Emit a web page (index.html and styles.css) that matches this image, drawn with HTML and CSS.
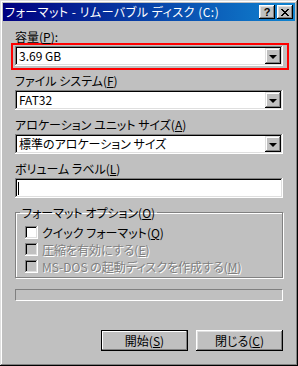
FILE: index.html
```html
<!DOCTYPE html>
<html lang="ja">
<head>
    <meta charset="UTF-8">
    <title>フォーマット - リムーバブル ディスク (C:)</title>
    <link rel="stylesheet" href="styles.css">
</head>
<body>
    <div class="window">
        <div class="titlebar">
            <span class="title">フォーマット - リムーバブル ディスク (C:)</span>
            <div class="title-btns">
                <div class="tbtn">?</div>
                <div class="tbtn close">
                    <svg width="8" height="7" viewBox="0 0 8 7"><path d="M0 0h2v1h1v1h2v-1h1v-1h2v1h-1v1h-1v1h-1v1h1v1h1v1h1v1h-2v-1h-1v-1h-2v1h-1v1h-2v-1h1v-1h1v-1h1v-1h-1v-1h-1v-1h-1z" fill="#000"/></svg>
                </div>
            </div>
        </div>

        <div class="content">
            <div class="label">容量(<u>P</u>):</div>
            <div class="marked">
                <div class="combo"><span class="value">3.69 GB</span><div class="drop"></div></div>
            </div>

            <div class="label">ファイル システム(<u>F</u>)</div>
            <div class="combo"><span class="value">FAT32</span><div class="drop"></div></div>

            <div class="label">アロケーション ユニット サイズ(<u>A</u>)</div>
            <div class="combo"><span class="value">標準のアロケーション サイズ</span><div class="drop"></div></div>

            <div class="label">ボリューム ラベル(<u>L</u>)</div>
            <div class="textbox"><span class="caret"></span></div>

            <fieldset class="group">
                <legend>フォーマット オプション(<u>O</u>)</legend>
                <div class="check"><span class="box"></span>クイック フォーマット(<u>Q</u>)</div>
                <div class="check disabled"><span class="box"></span>圧縮を有効にする(<u>E</u>)</div>
                <div class="check disabled"><span class="box"></span>MS-DOS の起動ディスクを作成する(<u>M</u>)</div>
            </fieldset>

            <div class="progress"></div>

            <div class="buttons">
                <div class="btn default">開始(<u>S</u>)</div>
                <div class="btn">閉じる(<u>C</u>)</div>
            </div>
        </div>
    </div>
</body>
</html>
```

FILE: styles.css
```css
body {
    margin: 0;
    background: #c0c0c0;
    font-family: "Noto Sans CJK JP", sans-serif;
    font-size: 12px;
    font-feature-settings: "palt";
    color: #000;
}
u {
    text-decoration: underline;
    text-underline-offset: 1px;
}
.window {
    width: 298px;
    height: 366px;
    box-sizing: border-box;
    padding: 3px;
    background: #c0c0c0;
    box-shadow: inset -1px -1px #000, inset 1px 1px #dfdfdf, inset -2px -2px #808080, inset 2px 2px #fff;
}
.titlebar {
    height: 18px;
    display: flex;
    align-items: center;
    justify-content: space-between;
    padding-left: 2px;
    background: linear-gradient(to right, #000080, #1084d0);
    color: #fff;
}
.title {
    line-height: 18px;
    letter-spacing: 0.5px;
    white-space: nowrap;
}
.title-btns {
    display: flex;
    gap: 2px;
    margin-right: 2px;
}
.tbtn {
    width: 16px;
    height: 14px;
    box-sizing: border-box;
    display: flex;
    align-items: center;
    justify-content: center;
    background: #c0c0c0;
    color: #000;
    font-family: "Liberation Sans", sans-serif;
    font-weight: bold;
    font-size: 11px;
    line-height: 14px;
    box-shadow: inset -1px -1px #000, inset 1px 1px #fff, inset -2px -2px #808080, inset 2px 2px #dfdfdf;
}
.content {
    padding: 9px 12px 0 12px;
}
.label {
    height: 13px;
    line-height: 13px;
    white-space: nowrap;
    margin-bottom: 3px;
}
.marked {
    margin: -3px -6px 4px -4px;
    border: 2px solid #f00;
    padding: 1px 4px 2px 2px;
}
.combo, .textbox {
    height: 20px;
    box-sizing: border-box;
    background: #fff;
    display: flex;
    align-items: center;
    padding: 2px;
    box-shadow: inset -1px -1px #fff, inset 1px 1px #808080, inset -2px -2px #dfdfdf, inset 2px 2px #000;
    margin-bottom: 8px;
}
.marked .combo {
    margin-bottom: 0;
}
.value {
    flex: 1;
    padding-left: 2px;
    line-height: 14px;
    white-space: nowrap;
}
.drop {
    width: 16px;
    height: 16px;
    box-sizing: border-box;
    background: #c0c0c0;
    display: flex;
    align-items: center;
    justify-content: center;
    box-shadow: inset -1px -1px #000, inset 1px 1px #dfdfdf, inset -2px -2px #808080, inset 2px 2px #fff;
}
.drop::after {
    content: "";
    border-left: 4px solid transparent;
    border-right: 4px solid transparent;
    border-top: 4px solid #000;
    margin-top: 1px;
}
.caret {
    width: 1px;
    height: 13px;
    margin-left: 1px;
    background: #000;
}
.group {
    margin: 0;
    padding: 4px 0 7px 9px;
    border: 1px solid #808080;
    box-shadow: inset 1px 1px #fff, 1px 1px #fff;
    height: 72px;
    box-sizing: border-box;
}
.group legend {
    padding: 0 2px;
    margin-left: -5px;
    line-height: 13px;
}
.check {
    display: flex;
    align-items: center;
    height: 17px;
    white-space: nowrap;
}
.check:first-of-type {
    margin-top: 1px;
}
.box {
    width: 13px;
    height: 13px;
    box-sizing: border-box;
    background: #fff;
    margin-right: 4px;
    box-shadow: inset -1px -1px #fff, inset 1px 1px #808080, inset -2px -2px #dfdfdf, inset 2px 2px #000;
}
.disabled {
    color: #808080;
    text-shadow: 1px 1px #fff;
}
.disabled .box {
    background: #c0c0c0;
}
.progress {
    height: 12px;
    margin-top: 11px;
    box-sizing: border-box;
    border: 1px solid;
    border-color: #808080 #fff #fff #808080;
}
.buttons {
    display: flex;
    justify-content: flex-end;
    gap: 8px;
    margin-top: 29px;
}
.btn {
    width: 87px;
    height: 21px;
    box-sizing: border-box;
    display: flex;
    align-items: center;
    justify-content: center;
    line-height: 14px;
    box-shadow: inset -1px -1px #000, inset 1px 1px #fff, inset -2px -2px #808080, inset 2px 2px #dfdfdf;
}
.btn.default {
    box-shadow: inset 0 0 0 1px #000, inset -2px -2px #808080, inset 2px 2px #fff;
}
```
